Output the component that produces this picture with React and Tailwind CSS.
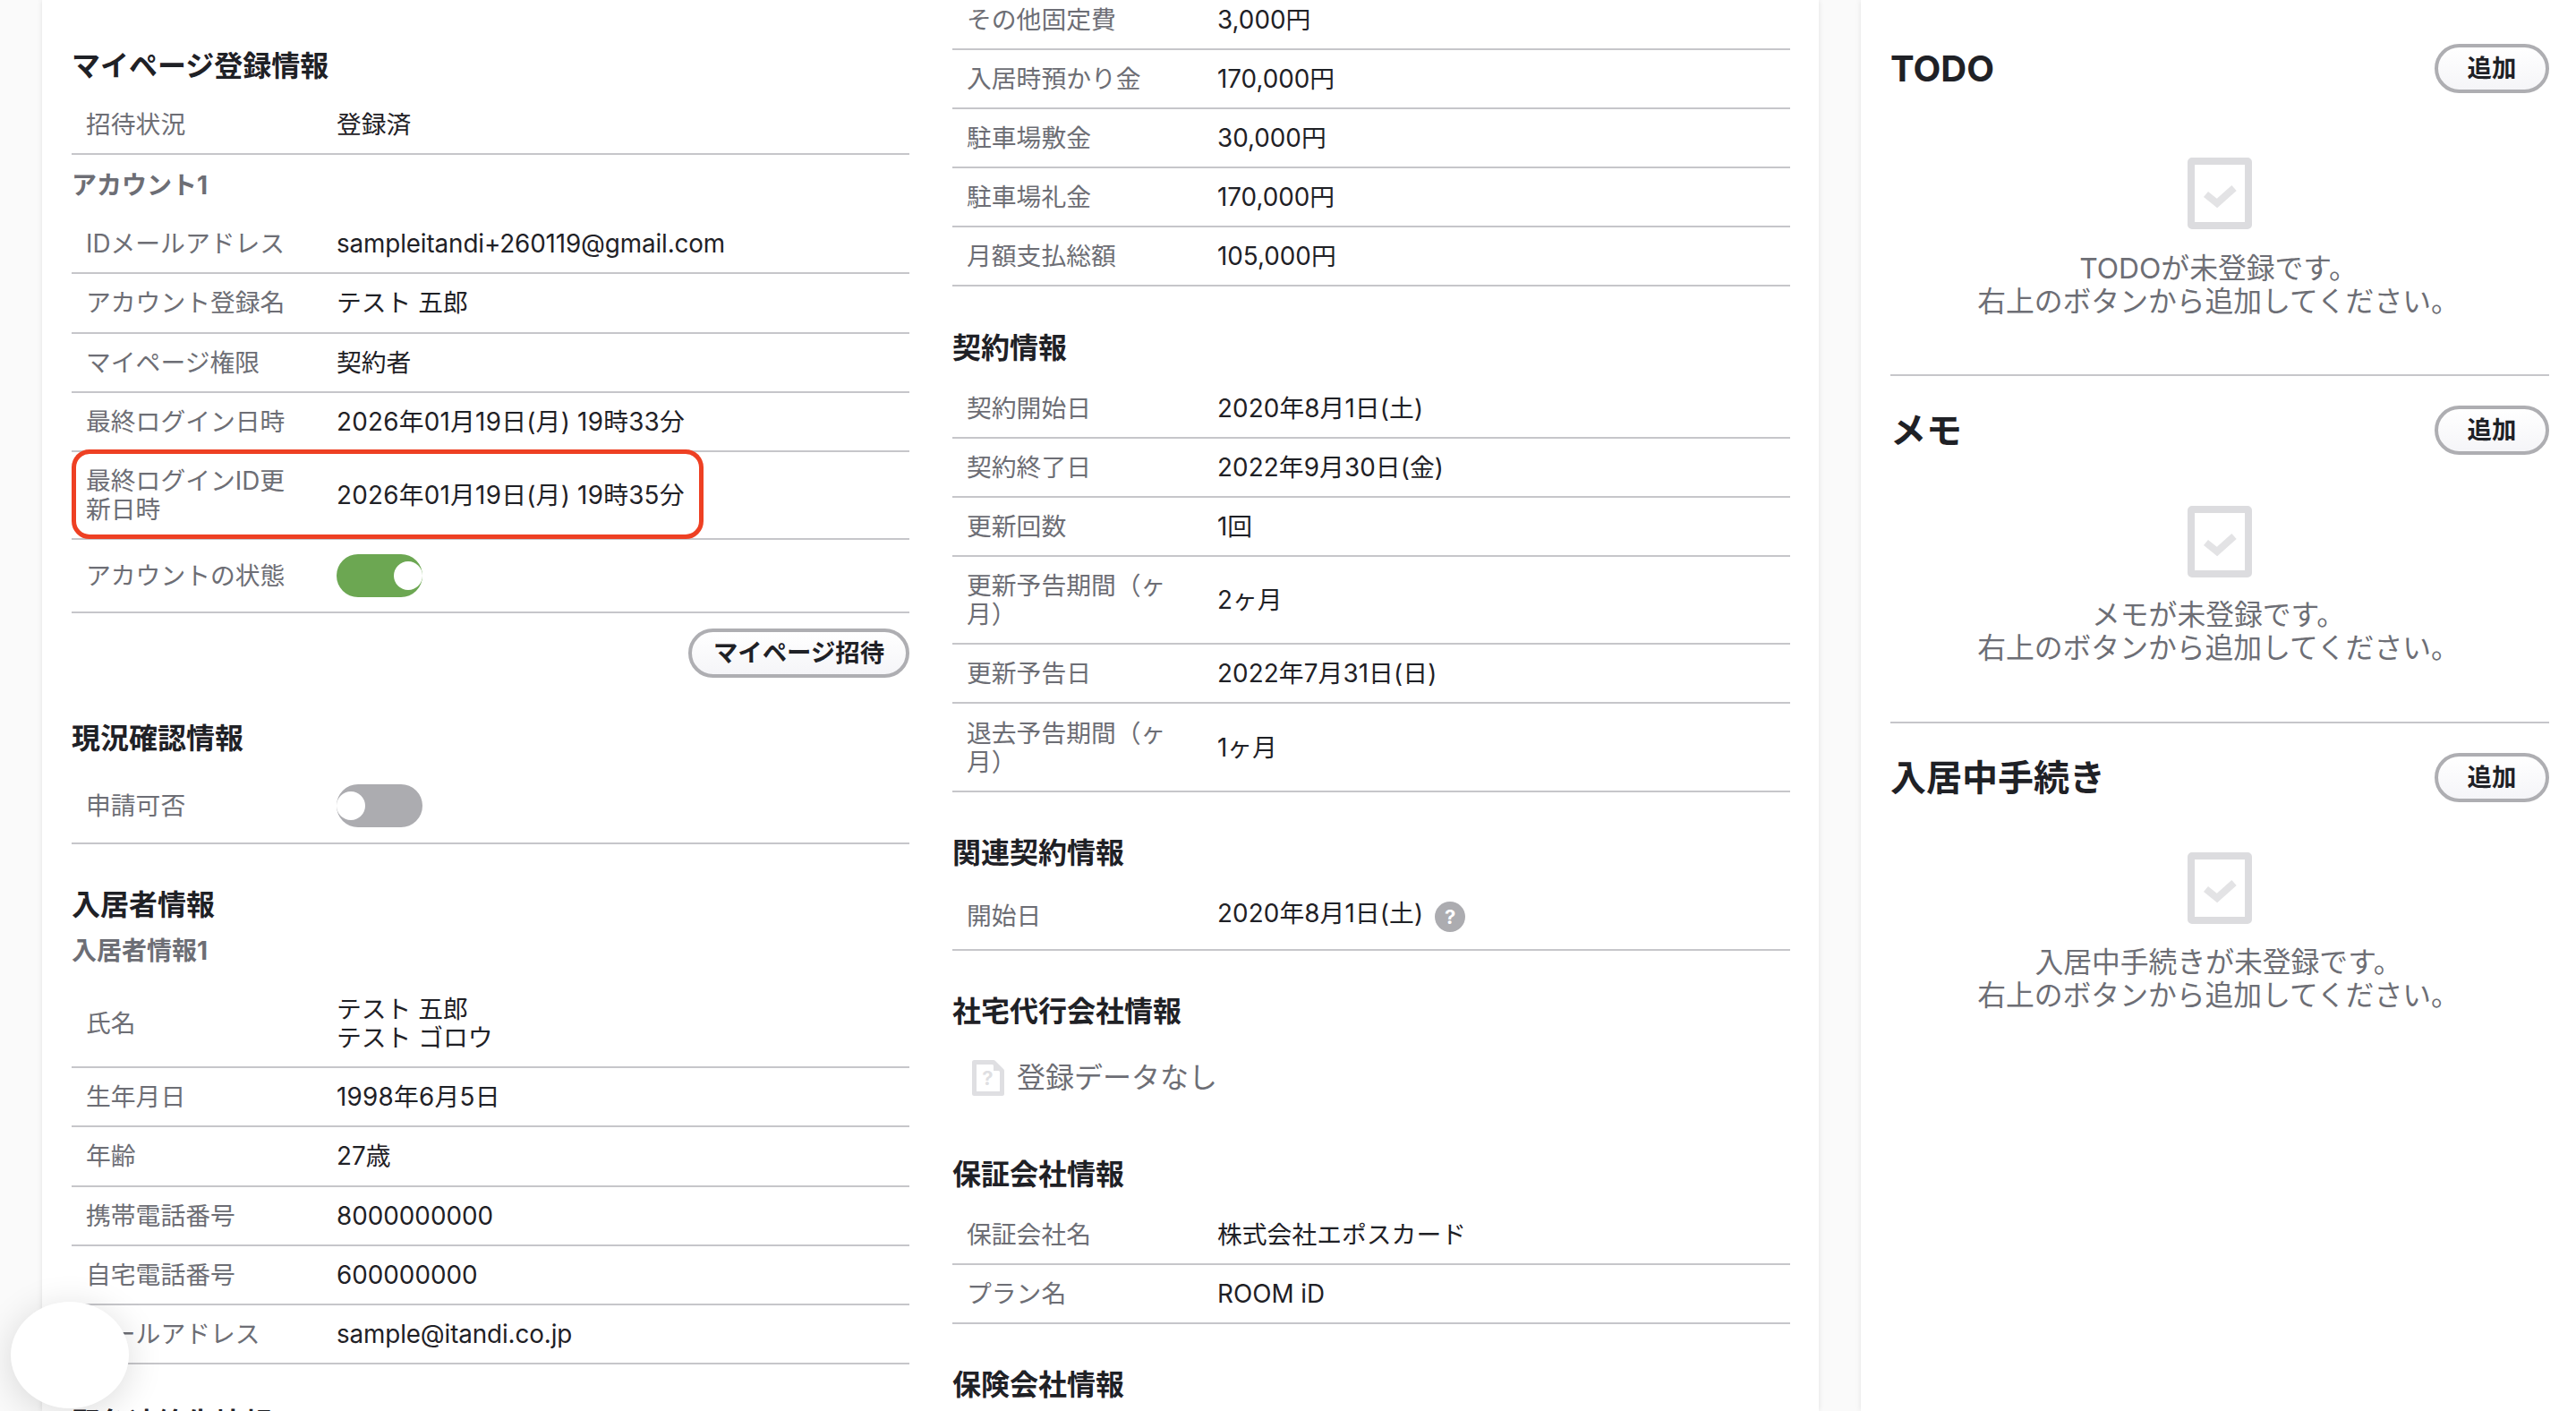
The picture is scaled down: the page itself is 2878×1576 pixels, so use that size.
import React from 'react';

const DATE = 'tracking-[0.25px]';
const DATE_NARROW = 'tracking-[0.1px]';
const MAIL = 'tracking-[-0.12px]';

const Row = ({ label, children, valueClass = '' }) => (
  <div className="flex items-center border-b-2 border-[#c6c6ca] py-[16.1px] leading-[32px]">
    <div className="w-[296px] shrink-0 pl-[16px] pr-[40px] text-[#6d6e75]">{label}</div>
    <div className={`text-[#1f2126] ${valueClass}`}>{children}</div>
  </div>
);

const Heading = ({ children, className = 'mb-[17.6px] mt-[52px]' }) => (
  <h2 className={`text-[32px] font-bold leading-[32px] text-[#1f2126] ${className}`}>{children}</h2>
);

const SubHeading = ({ children, className = '' }) => (
  <h3 className={`text-[28px] font-bold leading-[32px] text-[#6d6e75] ${className}`}>{children}</h3>
);

const Toggle = ({ on }) => (
  <div className={`flex h-[48px] w-[96px] items-center rounded-full ${on ? 'justify-end bg-[#6ca752]' : 'justify-start bg-[#acacb0]'}`}>
    <div className="h-[32px] w-[32px] rounded-full bg-white" />
  </div>
);

const PillButton = ({ children, className = '' }) => (
  <button className={`flex h-[55px] items-center justify-center rounded-full border-[4px] border-[#aeaeb2] bg-gradient-to-b from-white to-[#f5f5f8] text-[27.4px] font-bold text-[#1f2126] ${className}`}>
    {children}
  </button>
);

const CheckIcon = () => (
  <svg width="72" height="80" viewBox="0 0 72 80" fill="none">
    <rect x="4" y="4" width="64" height="72" rx="1" stroke="#dcdcdf" strokeWidth="8" />
    <path d="M20.5 41 L33 51 L52 34" stroke="#e3e3e5" strokeWidth="8" />
  </svg>
);

const NoDataIcon = () => (
  <svg width="36" height="40" viewBox="0 0 36 40" fill="none">
    <path d="M2.5 2.5 H24 L33.5 12 V37.5 H2.5 Z" stroke="#dfdfe2" strokeWidth="5" strokeLinejoin="round" fill="white" />
    <path d="M24 2 V12 H34" fill="#dfdfe2" />
    <text x="17.5" y="28" textAnchor="middle" fontSize="22" fontWeight="700" fill="#dfdfe2">?</text>
  </svg>
);

const Memo = ({ title, message, iconClass, textClass, className = '' }) => (
  <section className={className}>
    <div className="flex items-center justify-between">
      <h2 className="text-[40px] font-bold leading-[55px] text-[#1f2126]">{title}</h2>
      <PillButton className="w-[128px]">追加</PillButton>
    </div>
    <div className={`flex flex-col items-center ${iconClass}`}>
      <CheckIcon />
      <p className={`pr-[3px] text-center text-[31.8px] leading-[36.8px] text-[#6d6e75] ${textClass}`}>
        {message}
        <br />
        右上のボタンから追加してください。
      </p>
    </div>
  </section>
);

export default function App() {
  return (
    <div className="relative flex h-[1576px] gap-[47px] overflow-hidden bg-[#fafafa] pl-[47px] font-['Inter','Noto_Sans_CJK_JP',sans-serif] text-[27.8px]">
      <main className="flex w-[1985px] shrink-0 gap-[48px] bg-white px-[33px] shadow-[0_0_6px_rgba(0,0,0,0.1)]">
        <div className="w-[936px] shrink-0 pt-[58px]">
          <Heading className="mb-[17px]">マイページ登録情報</Heading>
          <Row label="招待状況">登録済</Row>
          <SubHeading className="mb-[17px] mt-[18px]">アカウント1</SubHeading>
          <Row label="IDメールアドレス" valueClass={MAIL}>sampleitandi+260119@gmail.com</Row>
          <Row label="アカウント登録名">テスト 五郎</Row>
          <Row label="マイページ権限">契約者</Row>
          <Row label="最終ログイン日時" valueClass={DATE}>2026年01月19日(月) 19時33分</Row>
          <div className="relative">
            <Row label="最終ログインID更新日時" valueClass={DATE}>2026年01月19日(月) 19時35分</Row>
            <div className="absolute left-0 top-[-3px] h-[100px] w-[706px] rounded-[20px] border-[5px] border-[#ee4023]" />
          </div>
          <Row label="アカウントの状態"><Toggle on /></Row>
          <div className="mt-[16.5px] flex justify-end">
            <PillButton className="w-[247px]">マイページ招待</PillButton>
          </div>

          <Heading className="mb-[19.5px] mt-[52px]">現況確認情報</Heading>
          <Row label="申請可否"><Toggle /></Row>

          <Heading className="mt-[52px]">入居者情報</Heading>
          <SubHeading className="mb-[17px] mt-[19.5px]">入居者情報1</SubHeading>
          <Row label="氏名">テスト 五郎<br />テスト ゴロウ</Row>
          <Row label="生年月日" valueClass={DATE}>1998年6月5日</Row>
          <Row label="年齢">27歳</Row>
          <Row label="携帯電話番号">8000000000</Row>
          <Row label="自宅電話番号">600000000</Row>
          <Row label="メールアドレス" valueClass={MAIL}>sample@itandi.co.jp</Row>

          <Heading className="mt-[50px]">緊急連絡先情報</Heading>
        </div>

        <div className="-mt-[10.6px] w-[936px] shrink-0">
          <Row label="その他固定費">3,000円</Row>
          <Row label="入居時預かり金">170,000円</Row>
          <Row label="駐車場敷金">30,000円</Row>
          <Row label="駐車場礼金">170,000円</Row>
          <Row label="月額支払総額">105,000円</Row>

          <Heading className="mb-[18.6px] mt-[52.6px]">契約情報</Heading>
          <Row label="契約開始日" valueClass={DATE_NARROW}>2020年8月1日(土)</Row>
          <Row label="契約終了日" valueClass={DATE_NARROW}>2022年9月30日(金)</Row>
          <Row label="更新回数">1回</Row>
          <Row label="更新予告期間（ヶ月）">2ヶ月</Row>
          <Row label="更新予告日" valueClass={DATE_NARROW}>2022年7月31日(日)</Row>
          <Row label="退去予告期間（ヶ月）">1ヶ月</Row>

          <Heading>関連契約情報</Heading>
          <Row label="開始日">
            <div className="flex h-[42px] items-start gap-[13px]">
              <span className={`mt-[2px] ${DATE_NARROW}`}>2020年8月1日(土)</span>
              <span className="mt-[5px] flex h-[34px] w-[34px] items-center justify-center rounded-full bg-[#acacb0] text-[22px] font-bold text-white">?</span>
            </div>
          </Row>

          <Heading>社宅代行会社情報</Heading>
          <div className="flex h-[80px] items-center gap-[14px] pl-[22px] text-[32px] text-[#6d6e75]">
            <NoDataIcon />
            <span>登録データなし</span>
          </div>

          <Heading className="mb-[19px] mt-[52px]">保証会社情報</Heading>
          <Row label="保証会社名">株式会社エポスカード</Row>
          <Row label="プラン名">ROOM iD</Row>

          <Heading>保険会社情報</Heading>
        </div>
      </main>

      <aside className="w-[799px] shrink-0 bg-white pl-[33px] pr-[30px] pt-[49px] shadow-[0_0_6px_rgba(0,0,0,0.1)]">
        <Memo
          title="TODO"
          message="TODOが未登録です。"
          iconClass="mt-[72px]"
          textClass="mt-[26px]"
          className="h-[371.4px] border-b-2 border-[#c6c6ca]"
        />
        <Memo
          title="メモ"
          message="メモが未登録です。"
          iconClass="mt-[56.3px]"
          textClass="mt-[24.5px]"
          className="h-[388px] border-b-2 border-[#c6c6ca] pt-[33px]"
        />
        <Memo
          title="入居中手続き"
          message="入居中手続きが未登録です。"
          iconClass="mt-[56px]"
          textClass="mt-[25px]"
          className="pt-[32.6px]"
        />
      </aside>

      {/* floating chat launcher, blank in the capture */}
      <div className="absolute left-[12px] top-[1454px] h-[119px] w-[132px] rounded-[50%] bg-white shadow-[0_6px_40px_rgba(0,0,0,0.14)]" />
    </div>
  );
}
